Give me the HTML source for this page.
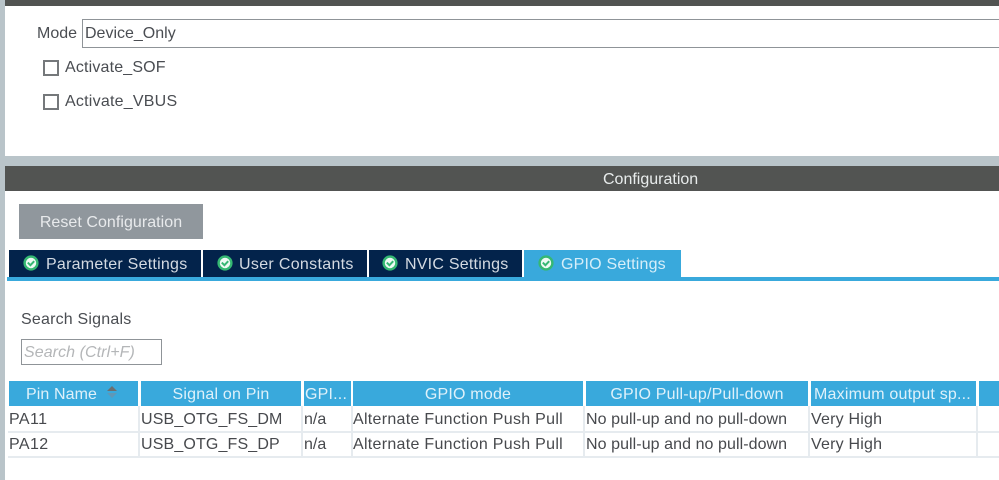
<!DOCTYPE html>
<html>
<head>
<meta charset="utf-8">
<style>
html,body{margin:0;padding:0;background:#fff;}
#p{position:relative;width:999px;height:480px;overflow:hidden;background:#fff;font-family:"Liberation Sans",sans-serif;font-size:16px;color:#4a4d52;filter:blur(.35px);}
#p div{position:absolute;box-sizing:border-box;white-space:nowrap;}
.t{line-height:20px;height:20px;}
.h{background:#39a9dc;color:#dff1fa;top:381px;height:25px;line-height:27px;text-align:center;letter-spacing:.2px;}
.c{line-height:26px;height:24px;color:#47494d;}
.tab{top:250px;height:27px;background:#03234b;color:#d4dae2;line-height:29px;}
.vl{width:2px;background:#e6ebef;top:406px;height:51px;}
.hl{height:2px;background:#e6ebef;left:8px;width:991px;}
svg{position:absolute;}
</style>
</head>
<body>
<div id="p">
<div style="left:0;top:0;width:5px;height:480px;background:#b9c4c9;"></div>
<div style="left:5px;top:0;width:994px;height:6px;background:#525452;"></div>
<div style="left:5px;top:156px;width:994px;height:10px;background:#b9c4c9;"></div>
<div style="left:5px;top:166px;width:994px;height:25px;background:#525452;"></div>
<div class="t" style="left:37px;top:24px;">Mode</div>
<div style="left:82px;top:19px;width:930px;height:29px;border:1px solid #8f9498;"></div>
<div class="t" style="left:85px;top:24px;">Device_Only</div>
<div style="left:43px;top:60px;width:16px;height:16px;border:2px solid #75787b;"></div>
<div class="t" style="left:65px;top:58px;letter-spacing:.17px;">Activate_SOF</div>
<div style="left:43px;top:94px;width:16px;height:16px;border:2px solid #75787b;"></div>
<div class="t" style="left:65px;top:92px;letter-spacing:.23px;">Activate_VBUS</div>
<div class="t" style="left:603px;top:170px;color:#e8ecec;">Configuration</div>
<div style="left:19px;top:204px;width:184px;height:35px;background:#90979d;color:#e8eaec;text-align:center;line-height:37px;letter-spacing:.05px;">Reset Configuration</div>
<div class="tab" style="left:9px;width:192px;padding-left:37px;letter-spacing:.25px;">Parameter Settings</div>
<div class="tab" style="left:203px;width:164px;padding-left:36px;letter-spacing:.32px;">User Constants</div>
<div class="tab" style="left:369px;width:153px;padding-left:36px;letter-spacing:.23px;">NVIC Settings</div>
<div class="tab" style="left:524px;width:157px;background:#39a9dc;color:#d6eef9;padding-left:37px;letter-spacing:.2px;">GPIO Settings</div>
<div style="left:7px;top:277px;width:992px;height:4px;background:#39a9dc;"></div>
<svg style="left:23px;top:255px" width="16" height="16" viewBox="0 0 16 16"><circle cx="8" cy="8" r="6.4" fill="#eefaf3" stroke="#35b873" stroke-width="2.4"/><path d="M4.8 7.6l2.6 2.6 3.8-4" fill="none" stroke="#35b873" stroke-width="2"/></svg>
<svg style="left:217px;top:255px" width="16" height="16" viewBox="0 0 16 16"><circle cx="8" cy="8" r="6.4" fill="#eefaf3" stroke="#35b873" stroke-width="2.4"/><path d="M4.8 7.6l2.6 2.6 3.8-4" fill="none" stroke="#35b873" stroke-width="2"/></svg>
<svg style="left:382px;top:255px" width="16" height="16" viewBox="0 0 16 16"><circle cx="8" cy="8" r="6.4" fill="#eefaf3" stroke="#35b873" stroke-width="2.4"/><path d="M4.8 7.6l2.6 2.6 3.8-4" fill="none" stroke="#35b873" stroke-width="2"/></svg>
<svg style="left:538px;top:255px" width="16" height="16" viewBox="0 0 16 16"><circle cx="8" cy="8" r="6.4" fill="#eefaf3" stroke="#35b873" stroke-width="2.4"/><path d="M4.8 7.6l2.6 2.6 3.8-4" fill="none" stroke="#35b873" stroke-width="2"/></svg>
<div class="t" style="left:21px;top:310px;letter-spacing:.2px;">Search Signals</div>
<div style="left:21px;top:339px;width:141px;height:26px;border:1px solid #8f9498;"></div>
<div class="t" style="left:24px;top:343px;color:#b4b6b8;font-style:italic;letter-spacing:.07px;">Search (Ctrl+F)</div>
<div class="h" style="left:9px;width:129px;padding-left:17px;text-align:left;letter-spacing:.1px;">Pin Name</div>
<svg style="left:106px;top:385px" width="12" height="14" viewBox="0 0 12 14"><path d="M1 6L6 1l5 5z" fill="#6b6f70"/><path d="M1 8l5 5 5-5z" fill="#5f98b8"/></svg>
<div class="h" style="left:141px;width:160px;">Signal on Pin</div>
<div class="h" style="left:304px;width:47px;text-align:left;padding-left:1px;">GPI...</div>
<div class="h" style="left:353px;width:230px;">GPIO mode</div>
<div class="h" style="left:586px;width:222px;">GPIO Pull-up/Pull-down</div>
<div class="h" style="left:811px;width:165px;text-align:left;padding-left:3px;">Maximum output sp...</div>
<div class="h" style="left:979px;width:20px;"></div>
<div class="hl" style="top:431px;"></div>
<div class="hl" style="top:456px;"></div>
<div class="vl" style="left:138px;"></div>
<div class="vl" style="left:301px;"></div>
<div class="vl" style="left:351px;"></div>
<div class="vl" style="left:583px;"></div>
<div class="vl" style="left:808px;"></div>
<div class="vl" style="left:976px;"></div>
<div class="c" style="left:9px;top:407px;letter-spacing:.4px;">PA11</div>
<div class="c" style="left:141px;top:407px;letter-spacing:.15px;">USB_OTG_FS_DM</div>
<div class="c" style="left:304px;top:407px;">n/a</div>
<div class="c" style="left:353px;top:407px;letter-spacing:.29px;">Alternate Function Push Pull</div>
<div class="c" style="left:586px;top:407px;letter-spacing:.07px;">No pull-up and no pull-down</div>
<div class="c" style="left:811px;top:407px;letter-spacing:.2px;">Very High</div>
<div class="c" style="left:9px;top:432px;letter-spacing:.4px;">PA12</div>
<div class="c" style="left:141px;top:432px;letter-spacing:.15px;">USB_OTG_FS_DP</div>
<div class="c" style="left:304px;top:432px;">n/a</div>
<div class="c" style="left:353px;top:432px;letter-spacing:.29px;">Alternate Function Push Pull</div>
<div class="c" style="left:586px;top:432px;letter-spacing:.07px;">No pull-up and no pull-down</div>
<div class="c" style="left:811px;top:432px;letter-spacing:.2px;">Very High</div>
</div>
</body>
</html>
